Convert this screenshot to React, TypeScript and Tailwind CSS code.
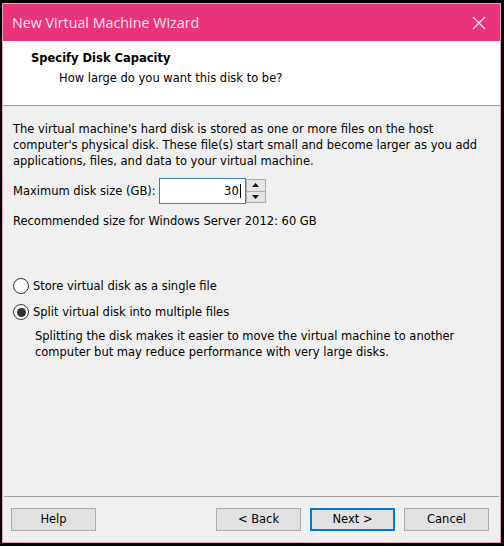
import React from "react";

export default function App() {
  const font = { fontFamily: "Tahoma, 'DejaVu Sans', 'Liberation Sans', sans-serif" };
  return (
    <div className="w-[504px] h-[546px] bg-black pt-[3px] pl-[2px]" style={font}>
      <div className="w-[499px] h-[540px] bg-[#f0f0f0] border border-[#e9a3bf] flex flex-col">
        <div className="h-[37px] bg-[#e9337a] flex items-center justify-between pl-[9px] pr-[14px] shrink-0">
          <span className="text-[14.3px] text-[#fbe3ec]" style={{ fontFamily: "'Segoe UI', 'Open Sans', 'Noto Sans', sans-serif" }}>
            New Virtual Machine Wizard
          </span>
          <svg width="14" height="14" viewBox="0 0 14 14">
            <path d="M1 1 L13 13 M13 1 L1 13" stroke="#fbe3ec" strokeWidth="1.3" />
          </svg>
        </div>
        <div className="h-[65px] bg-white border-b border-[#a0a0a0] pl-[28px] pt-[9px] shrink-0">
          <div className="text-[11.5px] font-bold text-black leading-[16px]">Specify Disk Capacity</div>
          <div className="text-[11.5px] text-black leading-[16px] mt-[4px] pl-[28px]">How large do you want this disk to be?</div>
        </div>
        <div className="flex-1 px-[10px] pt-[15px] text-[11.5px] text-black leading-[16px]">
          <p>
            The virtual machine's hard disk is stored as one or more files on the host computer's physical disk. These file(s) start small and become larger as you add applications, files, and data to your virtual machine.
          </p>
          <div className="flex items-center mt-[9px]">
            <span>Maximum disk size (GB):</span>
            <div className="ml-[3px] w-[87px] h-[26px] bg-white border border-[#3c7fb1] flex items-center justify-end pr-[4px]">
              <span>30</span>
              <span className="w-px h-[14px] bg-black ml-[1px]" />
            </div>
            <div className="w-[20px] h-[24px] border border-[#adadad] bg-[#f0f0f0] flex flex-col">
              <div className="flex-1 flex items-center justify-center border-b border-[#adadad] bg-[#e5e5e5]">
                <svg width="7" height="4" viewBox="0 0 7 4"><path d="M0 4 L3.5 0 L7 4 Z" fill="#000" /></svg>
              </div>
              <div className="flex-1 flex items-center justify-center bg-[#e5e5e5]">
                <svg width="7" height="4" viewBox="0 0 7 4"><path d="M0 0 L3.5 4 L7 0 Z" fill="#000" /></svg>
              </div>
            </div>
          </div>
          <div className="mt-[9px]">Recommended size for Windows Server 2012: 60 GB</div>
          <div className="mt-[49px] flex items-center gap-[4px]">
            <span className="w-[16px] h-[16px] rounded-full border border-[#333] bg-white" />
            <span>Store virtual disk as a single file</span>
          </div>
          <div className="mt-[10px] flex items-center gap-[4px]">
            <span className="w-[16px] h-[16px] rounded-full border border-[#333] bg-white flex items-center justify-center">
              <span className="w-[9px] h-[9px] rounded-full bg-[#333]" />
            </span>
            <span>Split virtual disk into multiple files</span>
          </div>
          <div className="pl-[22px] mt-[8px]">
            Splitting the disk makes it easier to move the virtual machine to another computer but may reduce performance with very large disks.
          </div>
        </div>
        <div className="h-[46px] border-t border-[#a0a0a0] mx-[1px] flex items-start pt-[11px] pl-[7px] pr-[10px] shrink-0 text-[11.5px]">
          <button className="w-[85px] h-[23px] bg-[#e1e1e1] border border-[#adadad] text-black">Help</button>
          <div className="flex-1" />
          <button className="w-[85px] h-[23px] bg-[#e1e1e1] border border-[#adadad] text-black">&lt; Back</button>
          <button className="ml-[9px] w-[85px] h-[23px] bg-[#e1e1e1] border-2 border-[#0078d7] text-black">Next &gt;</button>
          <button className="ml-[9px] w-[85px] h-[23px] bg-[#e1e1e1] border border-[#adadad] text-black">Cancel</button>
        </div>
      </div>
    </div>
  );
}
